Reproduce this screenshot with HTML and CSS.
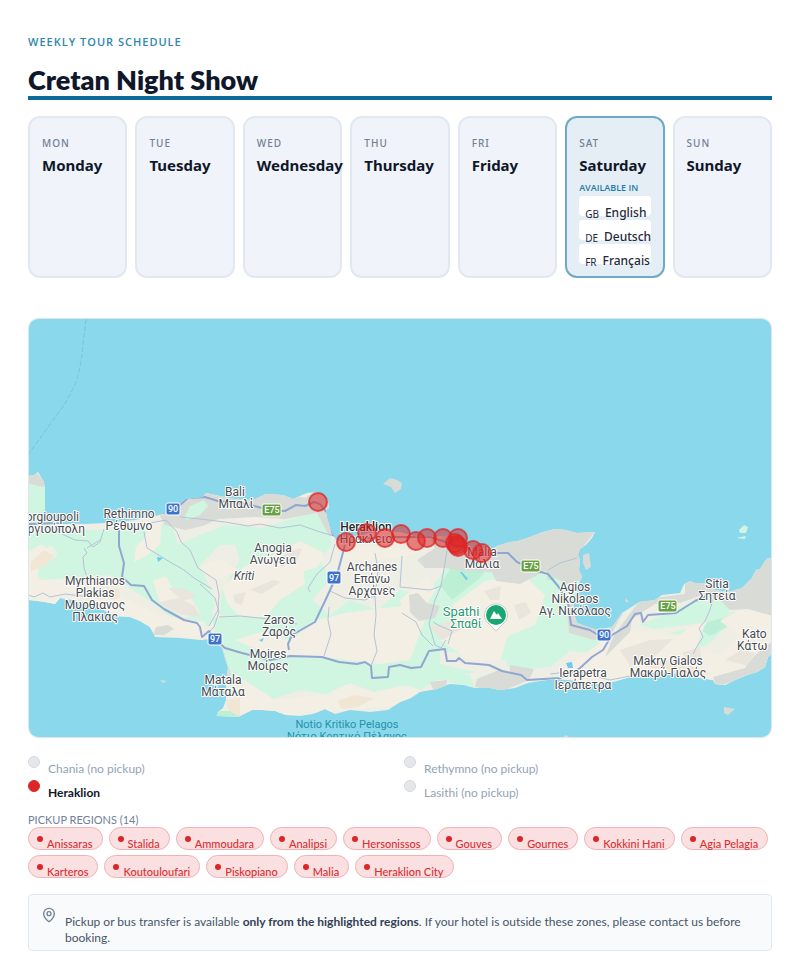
FILE: index.html
```html
<!DOCTYPE html>
<html lang="en">
<head>
    <meta charset="UTF-8">
    <meta name="viewport" content="width=device-width, initial-scale=1.0">
    <title>Cretan Night Show</title>
    <link rel="stylesheet" href="styles.css">
</head>
<body>

    <header class="header">
        <p class="kicker">WEEKLY TOUR SCHEDULE</p>
        <h1>Cretan Night Show</h1>
    </header>

    <section class="week">
        <div class="day"><span class="short">MON</span><h2>Monday</h2></div>
        <div class="day"><span class="short">TUE</span><h2>Tuesday</h2></div>
        <div class="day"><span class="short">WED</span><h2>Wednesday</h2></div>
        <div class="day"><span class="short">THU</span><h2>Thursday</h2></div>
        <div class="day"><span class="short">FRI</span><h2>Friday</h2></div>
        <div class="day active">
            <span class="short">SAT</span>
            <h2>Saturday</h2>
            <p class="available">AVAILABLE IN</p>
            <ul class="langs">
                <li><span class="code">GB</span>English</li>
                <li><span class="code">DE</span>Deutsch</li>
                <li><span class="code">FR</span>Français</li>
            </ul>
        </div>
        <div class="day"><span class="short">SUN</span><h2>Sunday</h2></div>
    </section>

    <div class="map">
        <svg viewBox="29 319 742 418" role="img" aria-label="Map of Crete">
            <defs>
                <clipPath id="land">
                    <path id="coast" d="M20 477L34 475L38 472L41 477L44 482L45 490L45 512L42 519L60 523L85 524L105 523L135 520L158 515L170 511L178 505L186 499L203 497L206 493L220 496L235 499L253 500L266 494L283 495L293 499L302 495L307 493L318 492L328 501L329 508L326 510L327 518L331 530L336 540L345 543L355 538L368 533L385 532L400 532L418 537L430 536L455 537L465 545L475 551L490 551L497 546L510 542L518 541L527 538L543 532L555 529L566 530L577 533L595 532L592 538L586 545L580 549L578 555L580 560L579 570L582 577L578 585L574 600L573 610L577 623L588 627L598 630L612 627L622 613L633 606L639 602L655 600L662 595L680 593L684 584L690 581L695 583L705 583L715 590L728 592L742 588L746 584L752 578L756 570L760 569L765 561L768 558L780 561L780 645L768 657L765 667L757 672L747 675L735 680L725 685L715 684L713 680L700 678L680 674L660 672L640 674L620 680L605 684L580 681L556 679L540 681L528 683L515 688L500 690L490 688L475 688L464 685L450 684L437 689L420 692L411 698L400 702L388 710L370 712L350 710L335 714L325 709L313 714L300 716L286 715L275 711L262 710L252 710L244 714L238 717L217 716L218 712L223 708L226 700L226 680L228 668L222 648L212 639L200 640L180 638L155 637L150 627L140 621L130 617L115 616L100 608L80 601L60 598L55 604L45 602L20 599Z"/>
                </clipPath>
            </defs>

            <rect class="sea" x="20" y="310" width="760" height="440"/>
            <path class="ferry" d="M86 319L83 345Q80 375 74 387L64 405L28 455"/>
            <use class="ground" href="#coast"/>

            <g clip-path="url(#land)">
                <!-- vegetation -->
                <path class="green" d="M20 485L50 484L48 517L60 530L148 530L170 520L178 545L200 535L225 525L262 528L285 521L325 510L332 545L320 560L330 580L312 600L330 615L350 600L378 610L400 590L425 595L445 570L470 540L500 548L545 575L560 570L580 580L570 640L540 665L500 660L505 640L480 640L470 655L440 650L440 672L470 675L475 690L440 678L420 690L395 680L375 692L350 683L330 695L300 690L270 700L242 681L232 697L222 648L260 650L285 640L255 620L220 615L222 590L240 560L235 545L220 545L200 565L215 600L210 625L190 630L155 605L125 585L110 575L40 580L36 570L58 555L52 545L28 560L20 560Z"/>
                <path class="green" d="M212 618L248 617L285 635L283 662L235 658L219 644ZM225 650L330 663L440 664L475 672L430 682L380 690L350 682L325 690L290 681L242 680ZM550 600L590 632L612 637L605 653L570 651L550 667L510 670L500 648L535 610ZM640 625L690 603L705 595L730 601L728 614L702 623L655 629ZM655 637L686 629L680 642L668 651L655 649ZM708 620L735 611L730 622L710 643L693 651L700 628Z"/>
                <path class="mint" d="M440 585L456 560L500 548L480 578L452 600ZM291 573L302 578L300 585L292 580ZM547 570L554 568L555 580L547 580ZM734 600L742 602L740 607L735 604ZM673 652L677 654L675 658L668 657ZM708 622L722 618L727 627L710 636L701 630Z"/>

                <!-- bare hills -->
                <path class="sand" d="M20 556L42 544L55 557L38 568L38 580L75 580L112 592L160 615L205 622L204 640L20 605ZM148 523L162 520L160 545L146 556L134 562L136 546L145 538ZM153 581L166 576L172 588L192 600L200 612L184 618L160 603ZM198 567L219 559L240 571L214 580ZM240 516L260 511L275 516L266 524L243 522ZM222 587L244 567L275 554L300 541L324 553L318 567L304 571L305 584L280 600L266 617L240 617L228 604ZM235 640L262 632L290 640L317 620L345 613L375 609L412 605L425 620L410 660L380 664L330 658L270 655ZM400 600L428 575L436 590L424 608L402 609ZM344 545L400 548L418 552L402 558L370 560L340 560ZM452 605L485 581L524 575L545 595L535 625L508 636L500 660L470 660L440 640L460 625ZM232 672L275 700L325 695L345 685L378 693L400 686L420 690L400 705L240 720Z"/>
                <path class="sand" d="M605 639L640 630L680 635L690 627L706 622L695 650L720 655L740 635L720 621L740 610L780 612L780 690L560 690L560 673Z"/>
                <path class="tan" d="M31 562L44 550L54 556L46 565L31 571ZM104 589L119 588L120 598L112 600L99 594ZM226 700L240 698L240 717L229 711ZM338 701L354 695L374 698L358 707L342 709ZM640 664L675 660L712 674L680 676Z"/>
                <path class="shade" d="M157 603L178 598L195 606L200 617L182 615L168 608ZM168 588L186 589L196 597L183 601ZM250 590L273 580L281 582L262 594ZM285 552L302 548L297 561L280 567ZM233 595L246 592L242 605L235 603ZM430 627L454 620L462 629L442 640ZM484 591L501 586L499 600L490 600ZM514 605L526 602L531 613L519 620ZM620 650L650 640L673 639L653 658L630 666ZM682 653L700 647L702 664L690 662ZM725 660L741 650L755 653L748 666Z"/>

                <!-- grey coastal areas -->
                <path class="rock" d="M20 476L34 470L47 484L43 487L30 484L20 488ZM172 508L205 490L255 496L280 492L305 498L320 488L330 503L327 514L335 536L329 536L317 513L285 519L255 517L218 519L203 526L185 530L165 525L160 516ZM153 635L156 627L168 625L174 629L164 635ZM222 646L228 665L231 675L226 680L218 655ZM409 595L418 593L427 603L440 606L435 618L419 621L410 612ZM417 560L435 548L430 540L455 535L470 550L493 550L505 540L530 535L565 525L597 529L583 547L582 580L566 584L545 571L520 584L496 581L492 572L463 571L446 568L425 568ZM430 682L447 680L446 690L434 691ZM477 679L499 670L510 672L510 665L534 669L529 680L500 692L475 687ZM573 600L567 608L569 633L594 640L611 635L625 609L610 620L595 626L577 622ZM614 635L640 600L685 594L685 580L697 580L728 593L750 575L768 555L780 560L780 618L748 609L730 610L720 600L705 594L680 603L655 604L632 619L630 632L616 646L605 657ZM780 635L755 655L745 668L713 677L716 687L770 670Z"/>
                <path class="hill" d="M184 518L190 506L204 500L208 506L200 515L187 520Z"/>

                <!-- minor roads -->
                <path class="minor" d="M62 534L75 540L88 541L93 547L100 542L104 529M84 548L87 553L83 557L84 568L87 577M87 548L100 540M150 523L166 520L177 532L181 542L190 550L198 568L216 580L219 595L218 610L209 626M144 532L147 548L170 562L184 570L194 578L212 589M200 584L215 598L219 612L214 627L208 633M180 517L200 519L225 522L248 526L260 524L280 528L300 525L320 532L334 536M219 617L240 616L270 619L297 624M335 544L330 562L317 574L308 588L310 592M375 553L378 570L375 596L376 615L374 635L377 651L371 666M375 596L365 600L345 598L330 591M390 587L387 594M402 556L400 587L430 590L441 586L448 545M441 586L435 600L429 624L435 645L441 648L446 640M402 613L416 622L422 635L433 646M28 595L34 597L43 593L50 597L65 594L90 597M433 622L440 626L452 631L448 644M329 607L328 620L331 634L324 656M714 595L710 610L705 621L699 628L703 637L696 648L693 654M548 570L560 563L577 558M550 674L575 671L610 680L640 674"/>

                <!-- main roads -->
                <path class="road" d="M28 524L85 522L105 521L150 516L170 511L180 505L188 498L205 497L218 501L250 505L270 510L285 511L296 505L305 506L314 502L320 504L328 514L333 535L345 540L385 537L430 537L465 548L490 556L497 553L508 553L517 562L537 571L548 574L558 586L568 602L571 625L590 630L598 635M345 545L337 575L325 601L315 622L292 635L288 644L289 650M119 530L119 546L124 563L122 577L131 585L144 586L152 600L164 609L184 620L197 623L200 627L202 637L209 631L215 639L225 648L242 653L270 660L290 656L322 657L339 662L357 664L365 662L371 666L372 678L388 677L389 667L400 665L411 668L421 667L429 651L445 649L447 661L456 661L459 658L465 663L489 665L502 671L521 675L527 680L560 678L579 669L592 657L603 650L612 635L627 626L635 614L641 613L643 622L648 615L676 613L695 601L706 596"/>
            </g>

            <!-- islets and lakes -->
            <path class="rock" d="M383 484L390 478L397 480L402 483L401 489L395 493L391 487ZM583 555L589 553L591 567L586 570L583 563ZM626 598L629 602L625 602ZM724 707L735 709L728 715L724 713ZM160 680L167 681L163 683ZM563 737L569 737L566 735Z"/>
            <path class="green" d="M739 530L744 525L748 527L746 533L740 533ZM736 538L746 536L745 539Z"/>
            <path class="mint" d="M216 716L220 711L230 711L240 717Z"/>
            <path class="lake" d="M157 557L163 558L158 562ZM460 572L462 572L468 579L466 580ZM259 640L264 638L262 642ZM566 663L572 662L573 668L568 668Z"/>

            <g class="places">
                <text x="79" y="521" class="end">orgioupoli</text>
                <text x="85" y="533" class="end">ργιούπολη</text>
                <text x="129" y="518">Rethimno</text>
                <text x="129" y="530">Ρέθυμνο</text>
                <text x="235" y="496">Bali</text>
                <text x="236" y="508">Μπαλί</text>
                <text x="273" y="552">Anogia</text>
                <text x="273" y="564">Ανώγεια</text>
                <text x="244" y="580" font-style="italic">Kriti</text>
                <text x="95" y="585">Myrthianos</text>
                <text x="95" y="597">Plakias</text>
                <text x="95" y="609">Μυρθιανος</text>
                <text x="95" y="621">Πλακιάς</text>
                <text x="279" y="624">Zaros</text>
                <text x="279" y="636">Ζαρός</text>
                <text x="268" y="658">Moires</text>
                <text x="268" y="670">Μοίρες</text>
                <text x="223" y="684">Matala</text>
                <text x="223" y="696">Μάταλα</text>
                <text x="366" y="531" class="city">Heraklion</text>
                <text x="366" y="543">Ηράκλειο</text>
                <text x="372" y="571">Archanes</text>
                <text x="372" y="583">Επάνω</text>
                <text x="372" y="595">Αρχάνες</text>
                <text x="482" y="556">Malia</text>
                <text x="482" y="568">Μάλια</text>
                <text x="575" y="591">Agios</text>
                <text x="575" y="603">Nikolaos</text>
                <text x="575" y="615">Αγ. Νικόλαος</text>
                <text x="583" y="677">Ierapetra</text>
                <text x="583" y="689">Ιεράπετρα</text>
                <text x="668" y="665">Makry Gialos</text>
                <text x="668" y="677">Μακρύ-Γιαλός</text>
                <text x="717" y="588">Sitia</text>
                <text x="717" y="600">Σητεία</text>
                <text x="742" y="638" class="start">Kato</text>
                <text x="737" y="650" class="start">Κάτω</text>
                <text x="461" y="616" class="peak peak-name">Spathi</text>
                <text x="466" y="628" class="peak">Σπαθί</text>
            </g>
            <g class="sea-name">
                <text x="347" y="728">Notio Kritiko Pelagos</text>
                <text x="347" y="740">Νότιο Κρητικό Πέλαγος</text>
            </g>

            <!-- road shields -->
            <g class="shields">
                <rect class="national" x="166" y="503" width="14" height="12" rx="2"/><text x="173" y="512">90</text>
                <rect class="national" x="327" y="571" width="14" height="13" rx="2"/><text x="334" y="581">97</text>
                <rect class="national" x="208" y="633" width="14" height="12" rx="2"/><text x="215" y="642">97</text>
                <rect class="national" x="597" y="629" width="14" height="12" rx="2"/><text x="604" y="638">90</text>
                <rect class="euro" x="262" y="504" width="19" height="12" rx="2"/><text x="272" y="513">E75</text>
                <rect class="euro" x="521" y="560" width="19" height="12" rx="2"/><text x="531" y="569">E75</text>
                <rect class="euro" x="658" y="600" width="19" height="12" rx="2"/><text x="668" y="609">E75</text>
            </g>

            <!-- Spathi peak pin -->
            <path class="pin-edge" d="M496 604a11 11 0 0 1 8 19l-8 8l-8-8a11 11 0 0 1 8-19Z"/>
            <circle class="pin" cx="496" cy="615" r="10"/>
            <path class="pin-peak" d="M490 619L494 611L497 615L498 613L502 619Z"/>

            <g class="pickups">
                <circle cx="318" cy="502" r="9"/>
                <circle cx="346" cy="542" r="9"/>
                <circle cx="367" cy="533" r="9"/>
                <circle cx="385" cy="538" r="9"/>
                <circle cx="401" cy="534" r="9"/>
                <circle cx="416" cy="541" r="9"/>
                <circle cx="427" cy="538" r="9"/>
                <circle cx="443" cy="538" r="9"/>
                <circle cx="458" cy="538" r="9"/>
                <circle cx="455" cy="543" r="9"/>
                <circle cx="457" cy="545" r="9"/>
                <circle cx="458" cy="547" r="9"/>
                <circle cx="473" cy="550" r="9"/>
                <circle cx="482" cy="553" r="9"/>
            </g>
        </svg>
    </div>

    <ul class="legend">
        <li><span class="dot"></span><span class="name">Chania (no pickup)</span></li>
        <li><span class="dot"></span><span class="name">Rethymno (no pickup)</span></li>
        <li class="on"><span class="dot"></span><span class="name">Heraklion</span></li>
        <li><span class="dot"></span><span class="name">Lasithi (no pickup)</span></li>
    </ul>

    <h3>PICKUP REGIONS (14)</h3>
    <ul class="chips">
        <li><span>Anissaras</span></li>
        <li><span>Stalida</span></li>
        <li><span>Ammoudara</span></li>
        <li><span>Analipsi</span></li>
        <li><span>Hersonissos</span></li>
        <li><span>Gouves</span></li>
        <li><span>Gournes</span></li>
        <li><span>Kokkini Hani</span></li>
        <li><span>Agia Pelagia</span></li>
        <li><span>Karteros</span></li>
        <li><span>Koutouloufari</span></li>
        <li><span>Piskopiano</span></li>
        <li><span>Malia</span></li>
        <li><span>Heraklion City</span></li>
    </ul>

    <div class="note">
        <svg class="note-icon" viewBox="0 0 24 24" aria-hidden="true">
            <path d="M20 10c0 5-5.500 10.200-7.400 11.800a1 1 0 0 1-1.200 0C9.500 20.200 4 15 4 10a8 8 0 0 1 16 0Z"/>
            <circle cx="12" cy="10" r="3"/>
        </svg>
        <p>Pickup or bus transfer is available <strong>only from the highlighted regions</strong>. If your hotel is outside these zones, please contact us before booking.</p>
    </div>

</body>
</html>
```

FILE: styles.css
```css
* {
    box-sizing: border-box;
}
body {
    margin: 0;
    padding: 32px 28px;
    background: #fff;
    color: #0f172a;
    font-family: Lato, "Liberation Sans", sans-serif;
    font-size: 12px;
}
h1, h2, h3, p, ul {
    margin: 0;
    padding: 0;
}
ul {
    list-style: none;
}

/* header */
.header {
    border-bottom: 4px solid #0b6a99;
    margin-bottom: 16px;
}
.kicker {
    color: #2f86ae;
    font-family: "Open Sans", "Noto Sans", sans-serif;
    font-size: 11px;
    font-weight: 600;
    letter-spacing: 1px;
    line-height: 20px;
}
h1 {
    margin-top: 12px;
    font-size: 27px;
    font-weight: 800;
    line-height: 32px;
}

/* week */
.week {
    display: grid;
    grid-template-columns: repeat(7, minmax(0, 1fr));
    gap: 8px;
    font-family: "Noto Sans", sans-serif;
}
.day {
    min-height: 162px;
    padding: 17px 12px 8px;
    background: #f0f3f9;
    border: 2px solid #e2e8f0;
    border-radius: 12px;
}
.day.active {
    background: #e5eef4;
    border-color: #6daac5;
}
.short {
    display: block;
    color: #718096;
    font-size: 10px;
    font-weight: 500;
    letter-spacing: 1px;
    line-height: 16px;
}
.day h2 {
    font-size: 15px;
    font-weight: 700;
    line-height: 28px;
    white-space: nowrap;
}
.available {
    color: #1f7ba7;
    font-family: "Open Sans", "Noto Sans", sans-serif;
    font-size: 9px;
    font-weight: 600;
    line-height: 17px;
    white-space: nowrap;
}
.langs {
    display: grid;
    grid-template-columns: minmax(0, 1fr);
    gap: 4px;
}
.langs li {
    display: flex;
    gap: 6px;
    height: 20px;
    padding: 8px 0 0 6px;
    background: #fff;
    border-radius: 4px;
    color: #1e293b;
    font-weight: 500;
    line-height: 18px;
    white-space: nowrap;
}
.code {
    font-size: 10px;
    font-weight: 400;
    line-height: 20px;
}

/* map */
.map {
    margin-top: 40px;
    border: 1px solid #dbe6ee;
    border-radius: 10px;
    overflow: hidden;
}
.map svg {
    display: block;
    width: 100%;
}
.sea { fill: #8ad8ec; }
.ferry {
    fill: none;
    stroke: #6cc8e2;
    stroke-dasharray: 5 2;
}
.ground { fill: #eeeee5; }
.green { fill: #d0f5e0; }
.mint { fill: #bcefd3; }
.sand { fill: #f4efe5; }
.tan { fill: #f1e5d4; }
.shade { fill: #e9e5dc; }
.rock { fill: #d9dbd6; }
.hill { fill: #d0f5e0; }
.lake { fill: #6ecbed; }
.minor, .road {
    fill: none;
    stroke-linejoin: round;
}
.minor {
    stroke: #b3c3d7;
    stroke-width: 1;
}
.road {
    stroke: #91a6d0;
    stroke-width: 2;
}
.places, .sea-name, .shields {
    font-family: Roboto, sans-serif;
    text-anchor: middle;
}
.places {
    fill: #474b50;
    font-size: 12px;
    paint-order: stroke;
    stroke: #fff;
    stroke-width: 2px;
    stroke-linejoin: round;
}
.places .start {
    text-anchor: start;
}
.places .end {
    text-anchor: end;
}
.places .city {
    fill: #25282b;
    font-weight: 500;
}
.places .peak {
    fill: #2a9873;
}
.places .peak-name {
    font-size: 13px;
}
.sea-name {
    fill: #2193aa;
    font-size: 11px;
}
.shields {
    fill: #fff;
    font-size: 9px;
    font-weight: 500;
}
.shields rect {
    stroke: #fff;
    stroke-width: 1;
}
.shields .national { fill: #3e73cb; }
.shields .euro { fill: #68a143; }
.pin-edge {
    fill: #fff;
    stroke: #c3cfc8;
}
.pin { fill: #18a673; }
.pin-peak { fill: #fff; }
.pickups circle {
    fill: #dc2626;
    fill-opacity: 0.55;
    stroke: #dc2626;
    stroke-opacity: 0.75;
    stroke-width: 2;
}

/* legend */
.legend {
    display: grid;
    grid-template-columns: 1fr 1fr;
    column-gap: 8px;
    margin-top: 18px;
}
.legend li {
    display: flex;
    gap: 8px;
    height: 24px;
    color: #94a3b8;
}
.dot {
    width: 12px;
    height: 12px;
    background: #e5e7eb;
    border: 1px solid #d5d9e0;
    border-radius: 50%;
}
.name {
    padding-top: 4px;
    line-height: 18px;
}
.legend .on {
    color: #0f172a;
    font-weight: 700;
}
.on .dot {
    background: #dc2626;
    border-color: #dc2626;
}

/* pickup regions */
h3 {
    margin-top: 8px;
    color: #718096;
    font-size: 11px;
    font-weight: 400;
    line-height: 16px;
}
.chips {
    display: flex;
    flex-wrap: wrap;
    gap: 5px 6px;
    margin-top: -1px;
}
.chips li {
    display: flex;
    gap: 4px;
    height: 23px;
    padding: 0 9px 0 8px;
    background: #fae0e1;
    border: 1px solid #f2b1b3;
    border-radius: 12px;
    color: #dc2f32;
    font-size: 11px;
    font-weight: 500;
    white-space: nowrap;
}
.chips li::before {
    content: "";
    width: 6px;
    height: 6px;
    margin-top: 8px;
    background: #dc2626;
    border-radius: 50%;
}
.chips span {
    padding-top: 8px;
    line-height: 16px;
}

/* note */
.note {
    display: flex;
    gap: 8px;
    margin-top: 16px;
    padding: 12px 12px 4px;
    background: #f8fafc;
    border: 1px solid #e2e8f0;
    border-radius: 4px;
    color: #475569;
}
.note-icon {
    flex: none;
    width: 16px;
    height: 16px;
    fill: none;
    stroke: #718096;
    stroke-width: 2;
}
.note p {
    padding-top: 7px;
    line-height: 16px;
}
.note strong {
    color: #334155;
}
```
